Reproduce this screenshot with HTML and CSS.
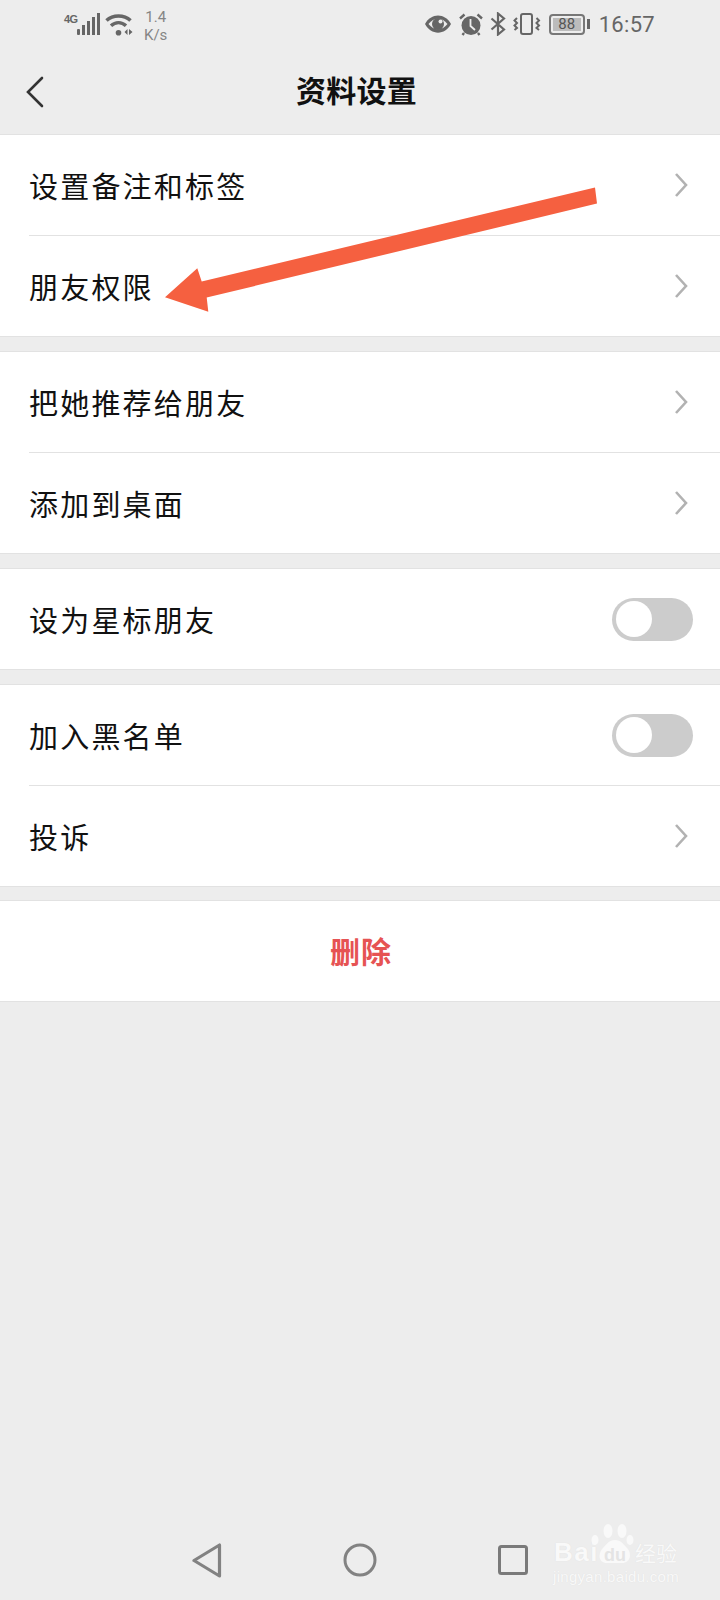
FILE: index.html
```html
<!DOCTYPE html>
<html lang="zh-CN">
<head>
<meta charset="utf-8">
<title>资料设置</title>
<link rel="stylesheet" href="styles.css">
</head>
<body>
<div class="page">
  <header class="status-bar">
    <div class="status-left">
      <span class="net">4G</span>
      <svg class="ic-signal" width="23" height="22" viewBox="0 0 23 22"><rect x="0" y="16" width="3" height="6" rx="1"/><rect x="5" y="12" width="3" height="10"/><rect x="10" y="8" width="3" height="14"/><rect x="15" y="4" width="3" height="18"/><rect x="20" y="0" width="3" height="22"/></svg>
      <svg class="ic-wifi" width="28" height="23" viewBox="0 0 28 23"><path d="M1.500 7.500C8 1.500 19 1.500 25.500 7.500" fill="none" stroke="#666" stroke-width="3.600"/><path d="M6 12.800C10.500 8.500 16.500 8.500 21 12.800" fill="none" stroke="#666" stroke-width="3.400"/><circle cx="13.500" cy="19.800" r="2.800" fill="#666"/><path d="M22.500 16V22L19.500 19ZM24 16V22L27.500 19Z" fill="#666"/></svg>
      <div class="speed"><span>1.4</span><span>K/s</span></div>
    </div>
    <div class="status-right">
      <svg width="28" height="20" viewBox="0 0 28 20"><path d="M1 10C7-1.500 21-1.500 27 10 21 21.500 7 21.500 1 10Z" fill="#666"/><path d="M4.500 10C10 3 18 3 23.500 10 18 17 10 17 4.500 10Z" fill="#ededed"/><circle cx="14" cy="10" r="6" fill="#666"/><circle cx="16.500" cy="7.500" r="2" fill="#ededed"/></svg>
      <svg width="24" height="23" viewBox="0 0 24 23"><circle cx="12" cy="12.500" r="9.500" fill="#666"/><path d="M11.500 6V13L16 17" fill="none" stroke="#ededed" stroke-width="1.800"/><path d="M1 5.500 5.500 1.500M23 5.500 18.500 1.500M5 20 3.500 22M19 20 20.500 22" stroke="#666" stroke-width="2.400"/></svg>
      <svg width="16" height="24" viewBox="0 0 16 24"><path d="M1.500 6.500 14 17.500 8 22.500V1.500L14 6.500 1.500 17.500" fill="none" stroke="#666" stroke-width="2.200"/></svg>
      <svg width="28" height="22" viewBox="0 0 28 22"><rect x="8" y="1" width="11" height="20" rx="2" fill="none" stroke="#666" stroke-width="2"/><path d="M4 5 1.500 7.500 4 10 1.500 12.500 4 15 1.500 17M23.500 5 26 7.500 23.500 10 26 12.500 23.500 15 26 17" fill="none" stroke="#666" stroke-width="2"/></svg>
      <div class="battery"><div class="battery-body"><span class="battery-level">88</span></div><i class="battery-tip"></i></div>
      <span class="clock">16:57</span>
    </div>
  </header>

  <nav class="toolbar">
    <svg class="back" width="18" height="32" viewBox="0 0 18 32"><path d="M16 2 2 16 16 30" fill="none" stroke="#333" stroke-width="2.600" stroke-linecap="round"/></svg>
    <h1 class="title">资料设置</h1>
  </nav>

  <section class="group">
    <div class="row"><span class="label">设置备注和标签</span><svg class="chev" width="14" height="24" viewBox="0 0 14 24"><path d="M2 1 12 12 2 23" /></svg></div>
    <div class="row"><span class="label">朋友权限</span><svg class="chev" width="14" height="24" viewBox="0 0 14 24"><path d="M2 1 12 12 2 23" /></svg></div>
  </section>
  <section class="group">
    <div class="row"><span class="label">把她推荐给朋友</span><svg class="chev" width="14" height="24" viewBox="0 0 14 24"><path d="M2 1 12 12 2 23" /></svg></div>
    <div class="row"><span class="label">添加到桌面</span><svg class="chev" width="14" height="24" viewBox="0 0 14 24"><path d="M2 1 12 12 2 23" /></svg></div>
  </section>
  <section class="group">
    <div class="row"><span class="label">设为星标朋友</span><span class="toggle"><i class="knob"></i></span></div>
  </section>
  <section class="group">
    <div class="row"><span class="label">加入黑名单</span><span class="toggle"><i class="knob"></i></span></div>
    <div class="row"><span class="label">投诉</span><svg class="chev" width="14" height="24" viewBox="0 0 14 24"><path d="M2 1 12 12 2 23" /></svg></div>
  </section>
  <section class="group group-plain">
    <div class="row row-center"><span class="danger">删除</span></div>
  </section>

  <footer class="nav-bar">
    <svg width="30" height="35" viewBox="0 0 30 35"><path d="M2 17.500 27.500 2V33Z" fill="none" stroke="#828282" stroke-width="3.200" stroke-linejoin="round"/></svg>
    <svg width="34" height="34" viewBox="0 0 34 34"><circle cx="17" cy="17" r="15" fill="none" stroke="#828282" stroke-width="3"/></svg>
    <svg width="30" height="30" viewBox="0 0 30 30"><rect x="1.500" y="1.500" width="27" height="27" rx="2" fill="none" stroke="#7a7a7a" stroke-width="3"/></svg>
  </footer>

  <svg class="arrow" width="720" height="400" viewBox="0 0 720 400"><path d="M595 187.500 597 203.500 206.700 297.500 208.300 311.700 165 297.300 197.300 268.300 201.700 281.500Z" fill="#f56040"/></svg>

  <div class="watermark">
    <span class="wm-bai">Bai</span>
    <span class="wm-logo">
      <svg class="paw" width="46" height="44" viewBox="0 0 46 44"><g fill="#f9f9f9"><ellipse cx="5" cy="18" rx="3.500" ry="5"/><ellipse cx="18" cy="9" rx="4.500" ry="7"/><ellipse cx="32" cy="9" rx="4.500" ry="7"/><ellipse cx="40" cy="18" rx="3.500" ry="5"/><path d="M25 18C31 18 33 22 37 26 42 31 41 41 32 41H17C8 41 8 31 13 26 17 22 19 18 25 18Z"/></g></svg>
      <span class="wm-du">du</span>
    </span>
    <span class="wm-cn">经验</span>
    <span class="wm-url">jingyan.baidu.com</span>
  </div>
</div>
</body>
</html>
```
FILE: styles.css
```css
* { box-sizing: border-box; margin: 0; padding: 0; }
html, body { width: 720px; height: 1600px; background: #ededed; overflow: hidden; }
body { font-family: "Noto Sans CJK SC", "Liberation Sans", sans-serif; color: #111; }
.page { position: relative; width: 720px; height: 1600px; display: flex; flex-direction: column; }

.status-bar { height: 50px; display: flex; justify-content: space-between; align-items: flex-start; padding: 8px 65px 0 64px; }
.status-left { display: flex; align-items: flex-start; position: relative; }
.net { font: bold 11px/10px "Liberation Sans", sans-serif; color: #666; width: 13px; margin-top: 6px; letter-spacing: -.6px; }
.ic-signal { fill: #666; margin-top: 5px; }
.ic-wifi { margin: 5px 0 0 5px; }
.speed { display: flex; flex-direction: column; align-items: center; margin-left: 11px; font: 15px/18px Roboto, sans-serif; color: #858585; }
.status-right { display: flex; align-items: center; gap: 7px; height: 38px; margin-top: -3px; }
.battery { display: flex; align-items: center; gap: 2px; margin-left: 1px; }
.battery-body { width: 36px; height: 21px; border: 2px solid #777; border-radius: 4px; padding: 2px; display: flex; }
.battery-level { flex: none; width: 28px; background: #bcbcbc; font: 15px/13px Roboto, sans-serif; color: #555; text-align: center; }
.battery-tip { width: 3px; height: 10px; background: #666; }
.clock { font: 22px/26px Roboto, sans-serif; color: #666; letter-spacing: .3px; margin: 2px 0 0 2px; }

.toolbar { height: 84px; position: relative; display: flex; align-items: center; justify-content: center; padding-right: 7px; }
.back { position: absolute; left: 26px; top: 26px; }
.title { font-size: 30px; font-weight: 700; line-height: 40px; color: #111; letter-spacing: .3px; margin-top: -6px; }

.group { background: #fff; border-top: 1px solid #e2e2e2; border-bottom: 1px solid #e2e2e2; margin-bottom: 14px; }
.group-plain { margin-top: -1px; }
.row { height: 100px; padding: 0 32px 0 29px; display: flex; align-items: center; justify-content: space-between; position: relative; }
.row + .row { height: 101px; padding-top: 1px; }
.row + .row::before { content: ""; position: absolute; left: 29px; right: 0; top: 0; height: 1px; background: #e2e2e2; }
.label { font-size: 29px; letter-spacing: 2.200px; line-height: 40px; color: #111; margin-top: -1px; }
.chev { fill: none; stroke: #b2b2b2; stroke-width: 2.600; }
.toggle { width: 81px; height: 43px; background: #ccc; border-radius: 22px; padding: 3.500px 4px; margin-right: -5px; display: flex; }
.knob { width: 36px; height: 36px; background: #fff; border-radius: 50%; }
.row-center { justify-content: center; padding-left: 34px; }
.danger { font-size: 30px; font-weight: 700; line-height: 40px; letter-spacing: 1px; color: #e65353; margin-top: -2px; }

.nav-bar { margin-top: auto; height: 80px; display: flex; align-items: center; padding: 0 192px; justify-content: space-between; }

.arrow { position: absolute; left: 0; top: 0; }
.watermark { position: absolute; left: 553px; top: 1522px; width: 130px; height: 62px; color: #f9f9f9; }
.wm-bai { position: absolute; left: 1px; top: 15px; font: bold 26px/30px "Liberation Sans", sans-serif; letter-spacing: 1.500px; text-shadow: 0 0 1px #dcdcdc; }
.wm-logo { position: absolute; left: 37px; top: 0; width: 46px; height: 44px; }
.paw { display: block; }
.wm-du { position: absolute; left: 9px; top: 23px; width: 32px; text-align: center; font: bold 18px/20px "Liberation Sans", sans-serif; color: #e4e4e4; }
.wm-cn { position: absolute; left: 82px; top: 16px; font: 21px/28px "Noto Sans CJK SC", sans-serif; text-shadow: 0 0 1px #dcdcdc; white-space: nowrap; }
.wm-url { position: absolute; left: 0; top: 47px; font: 15px/16px "Liberation Sans", sans-serif; letter-spacing: .3px; white-space: nowrap; text-shadow: 0 0 1px #dcdcdc; }
```
